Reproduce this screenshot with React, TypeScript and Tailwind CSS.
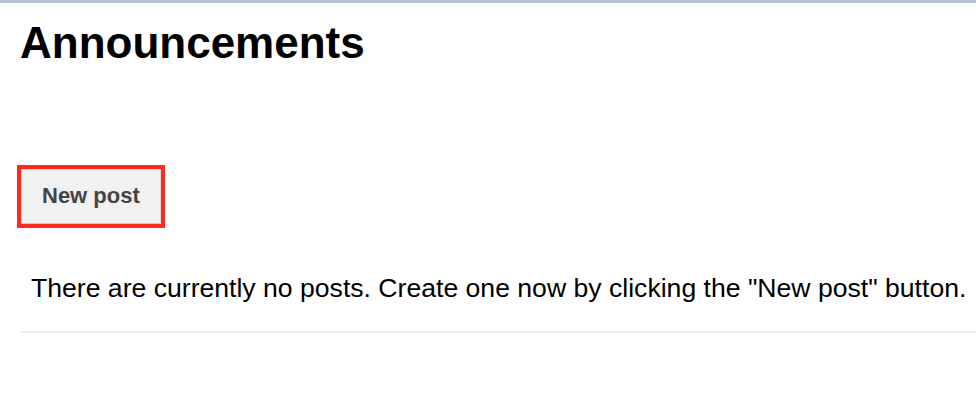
export default function App() {
  return (
    <div className="min-h-[416px] w-full bg-white font-['Liberation_Sans',Arial,sans-serif] text-black">
      <div className="h-[3px] bg-[#b6c2cd]" />
      <div className="pl-5">
        <h1 className="pt-[15px] text-[44px] font-bold leading-[50px]">Announcements</h1>
        <div className="mt-[97px] ml-[-3px] inline-block border-4 border-[#ff2a1f]">
          <button className="h-[55px] border border-[#d9d9d9] border-b-[#c8c8c8] bg-[#f1f1f1] px-[20px] pb-[3px] text-[22px] font-bold text-[#444]">
            New post
          </button>
        </div>
        <p className="mt-[45px] pl-[11px] text-[26.6px] leading-[30px]">
          There are currently no posts. Create one now by clicking the "New post" button.
        </p>
        <div className="mt-[28px] h-[2px] bg-[#eeeeee]" />
      </div>
    </div>
  )
}
